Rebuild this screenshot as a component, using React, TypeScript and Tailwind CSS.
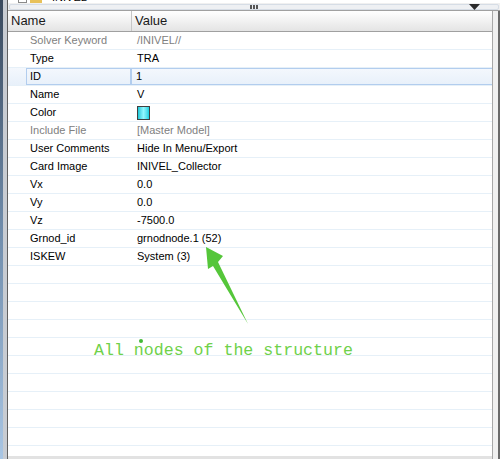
import React from "react";

type Row = { name: string; value?: string; gray?: boolean; color?: boolean; selected?: boolean };

const rows: Row[] = [
  { name: "Solver Keyword", value: "/INIVEL//", gray: true },
  { name: "Type", value: "TRA" },
  { name: "ID", value: "1", selected: true },
  { name: "Name", value: "V" },
  { name: "Color", color: true },
  { name: "Include File", value: "[Master Model]", gray: true },
  { name: "User Comments", value: "Hide In Menu/Export" },
  { name: "Card Image", value: "INIVEL_Collector" },
  { name: "Vx", value: "0.0" },
  { name: "Vy", value: "0.0" },
  { name: "Vz", value: "-7500.0" },
  { name: "Grnod_id", value: "grnodnode.1 (52)" },
  { name: "ISKEW", value: "System (3)" },
];

const empty = Array.from({ length: 12 });

export default function App() {
  return (
    <div
      className="relative w-[500px] h-[459px] overflow-hidden flex bg-[#f0f0f0] text-[11px]"
      style={{ fontFamily: "'Liberation Sans', Arial, sans-serif" }}
    >
      {/* left window edge */}
      <div className="w-[3px] h-full bg-gradient-to-b from-[#3a4a5e] via-[#6f8cab] to-[#a9c6e4]" />
      <div className="w-[4px] h-full bg-[#c8ccd2]" />
      <div className="w-[1px] h-full bg-[#5f5f5f]" />

      {/* main */}
      <div className="flex-1 flex flex-col min-w-0">
        {/* cut-off tree row */}
        <div className="h-[3px] bg-white relative overflow-hidden">
          <div className="absolute left-[10px] top-[-6px] w-[9px] h-[9px] border border-[#8a8a8a] bg-white" />
          <div className="absolute left-[22px] top-[-6px] w-[12px] h-[9px] bg-[#e8c15a]" />
          <div className="absolute left-[44px] top-[-9px] text-[11px] leading-[12px] text-black">INIVEL</div>
        </div>
        {/* splitter bar */}
        <div className="h-[7px] bg-[#f0f0f0] flex items-center px-[1px]">
          <div className="relative flex-1 h-[6px] border border-[#d6dde6] rounded-[2px] bg-[#eef0f3] flex items-center justify-center">
            <div className="flex gap-[1px]">
              <div className="w-[2px] h-[4px] bg-[#555]" />
              <div className="w-[2px] h-[4px] bg-[#555]" />
              <div className="w-[2px] h-[4px] bg-[#555]" />
            </div>
            <svg className="absolute right-[18px] top-[-1px]" width="11" height="7" viewBox="0 0 11 7">
              <polygon points="0,0 11,0 5.5,6" fill="#2a2a2a" />
            </svg>
          </div>
        </div>
        <div className="h-[1px] bg-[#a0a0a0]" />

        {/* header + table */}
        <div className="flex-1 flex min-h-0">
          <div className="flex-1 flex flex-col bg-white min-w-0">
            <div className="h-[21px] flex border-b border-[#a0a0a0] bg-gradient-to-b from-[#ffffff] to-[#e4e4e4] text-[13px] text-[#1a1a1a] shrink-0">
              <div className="w-[124px] border-r border-[#c6c6c6] pl-[3px] flex items-center">Name</div>
              <div className="flex-1 pl-[3px] flex items-center">Value</div>
            </div>
            <div className="flex-1 overflow-hidden">
              {rows.map((r, i) =>
                r.selected ? (
                  <div
                    key={i}
                    className="h-[18px] flex border-b border-[#e6f0f8] bg-gradient-to-b from-[#f4f8fd] to-[#e8f0fa]"
                  >
                    <div className="w-[18px]" />
                    <div className="w-[106px] flex items-center pl-[3px] border border-[#b2cdee] border-r-[2px] text-black">
                      {r.name}
                    </div>
                    <div className="flex-1 flex items-center pl-[4px] border-y border-[#b2cdee] text-black">
                      {r.value}
                    </div>
                  </div>
                ) : (
                  <div key={i} className="h-[18px] flex border-b border-[#e6f0f8]">
                    <div className="w-[18px]" />
                    <div
                      className={`w-[106px] flex items-center pl-[4px] ${r.gray ? "text-[#808080]" : "text-black"}`}
                    >
                      {r.name}
                    </div>
                    <div
                      className={`flex-1 flex items-center pl-[5px] ${r.gray ? "text-[#808080]" : "text-black"}`}
                    >
                      {r.color ? (
                        <div className="w-[13px] h-[14px] border border-[#404040] bg-gradient-to-r from-[#00c8d8] via-[#8ff8ff] to-[#00d0e0]" />
                      ) : (
                        r.value
                      )}
                    </div>
                  </div>
                )
              )}
              {empty.map((_, i) => (
                <div key={`e${i}`} className="h-[18px] border-b border-[#e6f0f8]" />
              ))}
            </div>
            <div className="h-[3px] bg-[#e2e2e2] shrink-0" />
          </div>
          <div className="w-[1px] bg-[#a8a8a8]" />
          <div className="w-[5px] bg-[#f0f0f0]" />
          <div className="w-[2px] bg-[#6a6a6a]" />
        </div>
      </div>

      {/* annotation arrow */}
      <svg className="absolute left-0 top-0 pointer-events-none" width="500" height="459" viewBox="0 0 500 459">
        <polygon
          points="206,247 223,256 218,262 248,324 213,266 208,269"
          fill="#55c63a"
        />
        <circle cx="141" cy="341" r="2" fill="#44b838" />
      </svg>
      <div
        className="absolute left-[94px] top-[341px] text-[16.6px] leading-[20px] text-[#6fd14a] whitespace-nowrap"
        style={{ fontFamily: "'Liberation Mono', 'Courier New', monospace" }}
      >
        All nodes of the structure
      </div>
    </div>
  );
}
